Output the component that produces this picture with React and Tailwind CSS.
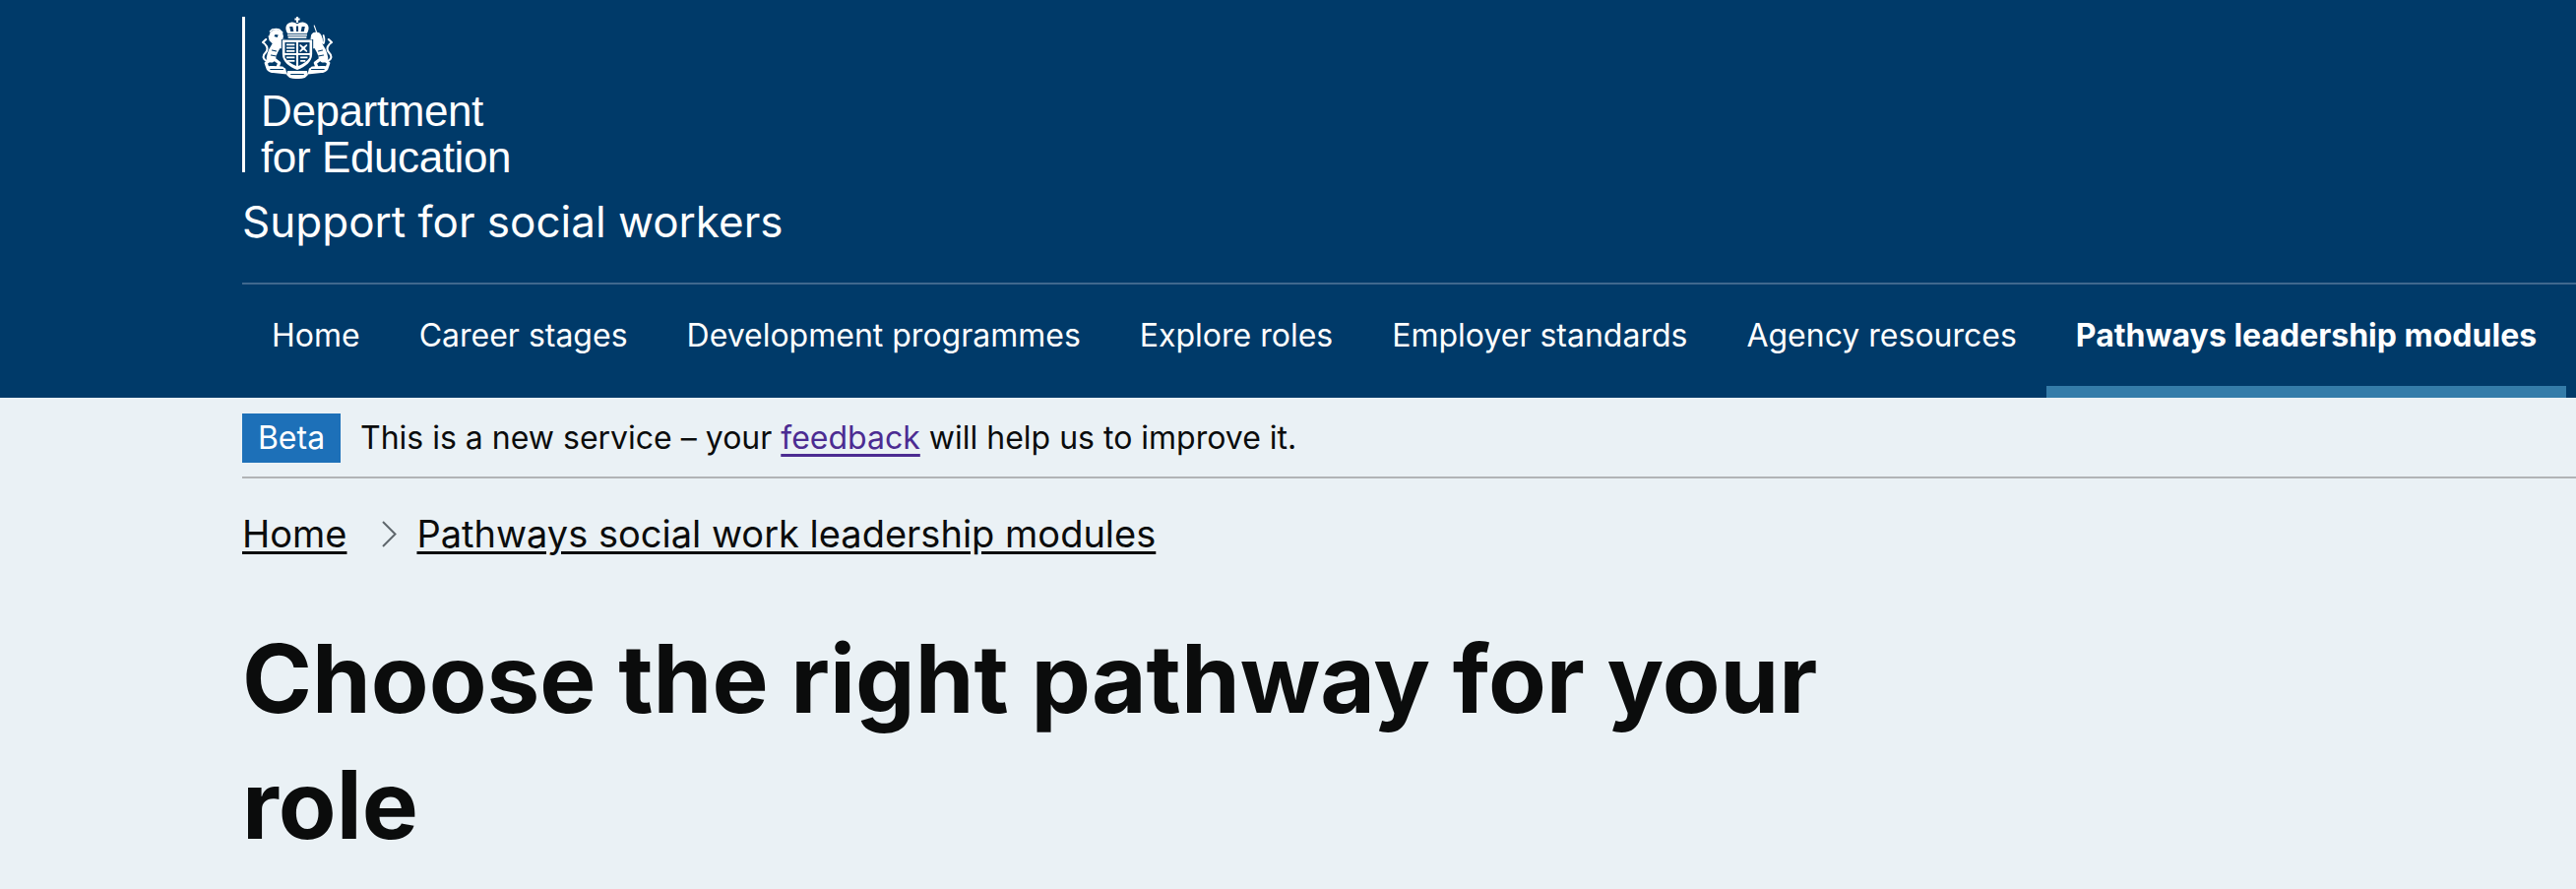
const nav = ["Home","Career stages","Development programmes","Explore roles","Employer standards","Agency resources"];

function Beast({ unicorn }) {
  return (
    <g transform={unicorn ? "translate(73 0) scale(-1 1)" : undefined} stroke="#fff" fill="none" strokeLinecap="round" strokeLinejoin="round">
      {unicorn ? (
        <>
          <path d="M20 9l-3 9" strokeWidth="1" />
          <path d="M12 27c0-7 2-11 6-11s5 2 5 6l-1 6z" fill="#fff" strokeWidth="1" />
          <path d="M11 19c-1 3-1 6 0 8" strokeWidth="1.800" />
        </>
      ) : (
        <>
          <circle cx="16" cy="20" r="7" fill="#fff" stroke="none" />
          <path d="M10 15l2-2 4-.5 3 .5 3 3M9 20l1 4 3 3" strokeWidth="1.400" />
          <path d="M15 18l3 .5-1 2.500-3-1z" fill="#003a69" stroke="none" />
        </>
      )}
      <path d="M18 27c-4 5-6 9-7 15" strokeWidth="9" />
      <path d="M10 44l-4 3 2 6h4" strokeWidth="3" />
      <path d="M14 43l5 4-2 5h5" strokeWidth="3" />
      <path d="M18 30l6 2M18 26l6-2" strokeWidth="2.600" />
      <path d="M8 45C3 44 2 40 6 36c3-4 0-8-3-10M3 26l3-3" strokeWidth="2" />
      <path d="M12 34l4 1M11 39l5 1" stroke="#003a69" strokeWidth="1" />
    </g>
  );
}

function Crest() {
  return (
    <svg width="72" height="63" viewBox="2 0 69 63" preserveAspectRatio="none" className="absolute left-[17px] top-0" fill="#fff">
      <Beast />
      <Beast unicorn />
      {/* crown */}
      <path d="M35.500 0h2v1.500H39v2h-1.500V6h-2V3.500H34v-2h1.500z" />
      <path d="M27 17c-3.500-6-1-11 4-11.500 2.500-.2 4.500 1 5.500 2 1-1 3-2.200 5.500-2 5 .5 7.500 5.500 4 11.500z" />
      <path d="M29 10h3l1 5h-3zM35.500 9.500h2V15h-2zM41 10h3l-1 5h-3z" fill="#003a69" />
      <rect x="27" y="17.800" width="19" height="1.600" />
      <rect x="27.500" y="20.200" width="18" height="1.600" />
      {/* shield */}
      <path d="M21 23h31v15c0 8-7 14-15.500 17C28 52 21 46 21 38z" fill="#003a69" />
      <path d="M22 23.500h29v14.500c0 7.500-6.500 13-14.500 16C28.500 51 22 45.500 22 38z" />
      <path d="M24.500 26h11v11h-11zM37.500 26h11v11h-11zM24.500 39h11v11c-5-2-9-5-11-8.500zM37.500 39h11v2.500c-2 3.500-6 6.500-11 8.500z" fill="#003a69" />
      <path d="M26 27.500h8v1.800h-8zM26 30.800h8v1.800h-8zM26 34h8v1.800h-8zM39.500 28l3 2.500 3-2.500 1 1-2.500 3 2.500 3-1 1-3-2.500-3 2.500-1-1 2.500-3-2.500-3zM26 40.500h8v1.800h-8zM27 44h7v1.800h-7zM39.500 40.500h7v1.800h-7zM39.500 44h5v1.800h-5z" />
      {/* motto */}
      <path d="M7 50.500c7-1 13-.5 18 2l1.500 6L13 57c-3 0-6-2-6-4zM66 50.500c-7-1-13-.5-18 2L46.500 58.500 60 57c3 0 6-2 6-4z" />
      <path d="M10 53h13v.9H10zM50 53h13v.9H50z" fill="#003a69" />
      <path d="M27 55h19l1 4-3 3c-5 1.400-10 1.400-15 0l-3-3z" />
      <path d="M30 58h13v1H30z" fill="#003a69" />
    </svg>
  );
}

function Logo() {
  return (
    <div className="relative h-[158px] w-[300px] border-l-[3px] border-white pl-[16px]">
      <Crest />
      <div className="pt-[72px] text-[44px] leading-[47px] tracking-[-0.4px] text-white whitespace-nowrap font-['Liberation_Sans',sans-serif]">
        <div>Department</div>
        <div>for Education</div>
      </div>
    </div>
  );
}

export default function App() {
  return (
    <div className="h-[903px] overflow-hidden bg-[#eaf1f5] font-['Inter',sans-serif] text-[#0b0c0c]">
      <header className="h-[404px] bg-[#003a69] pl-[246px] pt-[17px] text-white">
        <Logo />
        <div className="mt-[20px] text-[44px] leading-[60px]">Support for social workers</div>
        <nav className="mt-[32px] flex h-[117px] border-t-2 border-[#40688e]">
          {nav.map((n) => (
            <div key={n} className="flex h-[115px] items-center whitespace-nowrap px-[30px] pb-[12px] text-[32px]">{n}</div>
          ))}
          <div className="flex h-[115px] items-center whitespace-nowrap border-b-[12px] border-[#347ca9] px-[30px] text-[32px] font-bold">Pathways leadership modules</div>
        </nav>
      </header>
      <div className="pl-[246px]">
        <div className="flex h-[82px] items-start border-b-2 border-[#b1b4b6] pt-[16px]">
          <span className="flex h-[50px] w-[100px] items-center justify-center bg-[#1d70b8] text-[32px] text-white">Beta</span>
          <span className="ml-[20px] flex h-[50px] items-center whitespace-pre text-[32px]">This is a new service – your <a className="text-[#4c2c92] underline underline-offset-[5px]" href="#">feedback</a> will help us to improve it.</span>
        </div>
        <div className="mt-[28px] flex items-center text-[38px] leading-[56px]">
          <a className="underline underline-offset-[4px]" href="#">Home</a>
          <svg width="15" height="27" viewBox="0 0 15 27" className="ml-[36px] mr-[20px]" fill="none" stroke="#5f676c" strokeWidth="2"><path d="M1 1l12.500 12.500L1 26" /></svg>
          <a className="underline underline-offset-[4px]" href="#">Pathways social work leadership modules</a>
        </div>
        <h1 className="mt-[55px] w-[1700px] text-[96px] font-bold leading-[128px]">Choose the right pathway for your role</h1>
      </div>
    </div>
  );
}
